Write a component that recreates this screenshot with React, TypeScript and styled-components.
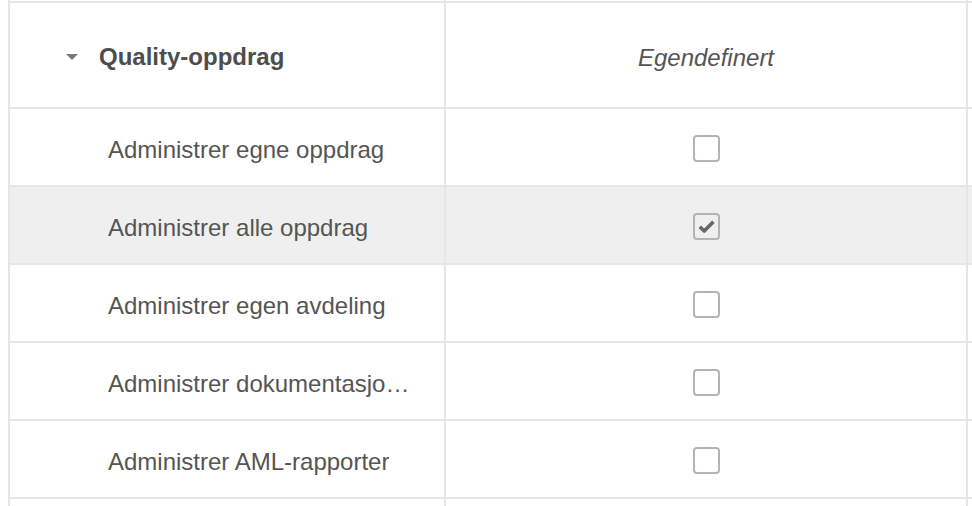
import { createGlobalStyle } from 'styled-components';
import styled from 'styled-components';

const GlobalStyle = createGlobalStyle`
    html, body {
        margin: 0;
        padding: 0;
        background: #ffffff;
    }
    body {
        padding-left: 8px;
        font-family: "Liberation Sans", Arial, Helvetica, sans-serif;
        overflow: hidden;
    }
`;

interface RowProps {
    highlighted?: boolean
    height: number
}

interface Permission {
    label: string,
    checked: boolean,
}

const permissions: Permission[] = [
    { label: 'Administrer egne oppdrag', checked: false },
    { label: 'Administrer alle oppdrag', checked: true },
    { label: 'Administrer egen avdeling', checked: false },
    { label: 'Administrer dokumentasjonskrav', checked: false },
    { label: 'Administrer AML-rapporter', checked: false },
];

const Table = styled.div`
    display: flex;
    flex-direction: column;
    color: #555555;
`;

const Row = styled.div<RowProps>`
    display: grid;
    grid-template-columns: 438px 522px 1fr;
    height: ${props => props.height}px;
    border-bottom: 2px solid #e6e6e6;
    background: ${props => props.highlighted ? '#efefef' : '#ffffff'};
`;

const Cell = styled.div`
    display: flex;
    align-items: center;
    min-width: 0;
    border-right: 2px solid #e6e6e6;

    &:first-child {
        border-left: 2px solid #e6e6e6;
    }
    &:last-child {
        border-right: none;
    }
`;

const GroupCell = styled(Cell)`
    padding-left: 56px;
    padding-top: 4px;
    gap: 21px;
`;

const LabelCell = styled(Cell)`
    padding-left: 98px;
    padding-right: 24px;
    padding-top: 5px;
`;

const CenterCell = styled(Cell)`
    justify-content: center;
`;

const Caret = styled.span`
    width: 0;
    height: 0;
    border-left: 6.5px solid transparent;
    border-right: 6.5px solid transparent;
    border-top: 6px solid #7a7a7a;
    margin-top: -1px;
`;

const GroupTitle = styled.span`
    font-size: 24px;
    font-weight: bold;
    color: #4d4d4d;
`;

const ColumnTitle = styled.span`
    font-size: 24px;
    font-style: italic;
    color: #555555;
    margin-top: 6px;
`;

const Label = styled.span`
    font-size: 24px;
    color: #555555;
    white-space: nowrap;
    overflow: hidden;
    text-overflow: ellipsis;
    max-width: 308px;
`;

const CheckBox = styled.span`
    box-sizing: border-box;
    width: 27px;
    height: 27px;
    margin-top: 2px;
    border: 2px solid #b4b4b4;
    border-radius: 4px;
    display: flex;
    align-items: center;
    justify-content: center;
    color: #666666;
`;

const CheckMark = () => (
    <svg width="17" height="13" viewBox="0 0 17 13">
        <path
            d="M1.8 6.8 L6.2 11 L15.4 1.8"
            fill="none"
            stroke="currentColor"
            strokeWidth="3.6"
            strokeLinejoin="round"
        />
    </svg>
);

const App = () => {
    return (
        <>
            <GlobalStyle />
            <Table>
                <Row height={1}>
                    <Cell />
                    <Cell />
                    <Cell />
                </Row>
                <Row height={104}>
                    <GroupCell>
                        <Caret />
                        <GroupTitle>Quality-oppdrag</GroupTitle>
                    </GroupCell>
                    <CenterCell>
                        <ColumnTitle>Egendefinert</ColumnTitle>
                    </CenterCell>
                    <Cell />
                </Row>
                {permissions.map(p => (
                    <Row key={p.label} height={76} highlighted={p.checked}>
                        <LabelCell>
                            <Label>{p.label}</Label>
                        </LabelCell>
                        <CenterCell>
                            <CheckBox>
                                {p.checked && <CheckMark />}
                            </CheckBox>
                        </CenterCell>
                        <Cell />
                    </Row>
                ))}
                <Row height={76}>
                    <LabelCell />
                    <CenterCell />
                    <Cell />
                </Row>
            </Table>
        </>
    );
};

export default App;
